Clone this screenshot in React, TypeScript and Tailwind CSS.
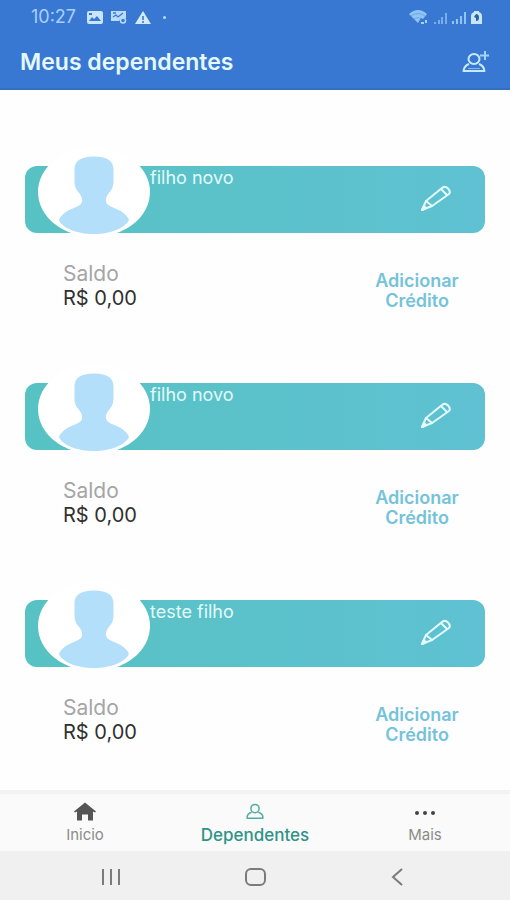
type Dependent = { id: number; name: string; balance: string };

const dependents: Dependent[] = [
  { id: 1, name: "filho novo", balance: "R$ 0,00" },
  { id: 2, name: "filho novo", balance: "R$ 0,00" },
  { id: 3, name: "teste filho", balance: "R$ 0,00" },
];

function StatusBar() {
  return (
    <div className="flex h-[34px] items-center justify-between pl-[31px] pr-7 text-[#a9cff8]">
      <div className="flex items-center gap-2">
        <span className="w-12 text-[18px] leading-5">10:27</span>
        <svg width="16" height="13" viewBox="0 0 16 13" aria-hidden="true">
          <path fill="#c9e5fb" fillRule="evenodd" d="M2 0h12q2 0 2 2v9q0 2-2 2H2q-2 0-2-2V2q0-2 2-2ZM2 10h12l-4-5-3 3-2-2Z" />
          <path fill="#3878d2" d="M2 2h3v2H2z" />
        </svg>
        <svg width="16" height="13" viewBox="0 0 16 13" aria-hidden="true">
          <path fill="#b9dcfa" d="M0 0h15v7h-5l-2 3H0Z" />
          <path fill="none" stroke="#3878d2" strokeWidth="1.3" d="m2 6 3-2 2 2 5-4M2 2h3" />
          <circle cx="12" cy="9.500" r="2.500" fill="none" stroke="#b9dcfa" strokeWidth="1.500" />
        </svg>
        <svg width="16" height="13" viewBox="0 0 16 13" aria-hidden="true">
          <path fill="#d1ebfc" d="m8 0 8 13H0Z" />
          <path stroke="#3878d2" strokeWidth="1.6" d="M8 5v4M8 10v2" />
        </svg>
        <span className="ml-1 size-[3px] rounded-full bg-[#b9dcfa]" />
      </div>
      <div className="flex items-end gap-[5px]">
        <svg width="20" height="14" viewBox="0 0 20 14" aria-hidden="true">
          <path fill="#8fc4f4" d="M0 4Q9-4 18 4l-4 5-2-1-3 5Z" />
          <path fill="none" stroke="#3878d2" strokeWidth=".4" d="M2 6q7-5 14 0M5 9q4-3 8 0" />
          <path stroke="#a9cff8" strokeWidth="2" d="M12 13h3M17 10v3" />
        </svg>
        <svg width="13" height="12" viewBox="0 0 13 12" aria-hidden="true">
          <path stroke="#79aeea" strokeWidth="2" d="M1 12v-2M5 12V8M8 12V5M12 12V1" />
        </svg>
        <svg width="14" height="13" viewBox="0 0 14 13" aria-hidden="true">
          <path stroke="#8fc4f4" strokeWidth="2" d="M1 13v-3M5 13V8M9 13V5M13 13V1" />
        </svg>
        <svg width="11" height="13" viewBox="0 0 11 13" aria-hidden="true">
          <path fill="#c9e5fb" d="M3 0h5v1q3 1 3 4v8H0V5q0-3 3-4Z" />
          <path fill="#2b5fae" d="M5 3q3 0 3 3.500T5 10V7L3 6Z" />
        </svg>
      </div>
    </div>
  );
}

function PersonIcon({ className }: { className: string }) {
  return (
    <svg viewBox="0 0 24 22" fill="none" stroke="currentColor" strokeWidth="2" className={className} aria-hidden="true">
      <ellipse cx="12" cy="7" rx="5.500" ry="5.500" />
      <path d="M7.500 12Q1 14 1.500 20h21Q23 14 16.500 12" strokeLinejoin="round" />
    </svg>
  );
}

function AddPersonIcon() {
  return (
    <svg width="28" height="22" viewBox="0 0 28 22" fill="none" stroke="#c6ebfc" strokeWidth="2" aria-hidden="true">
      <ellipse cx="12" cy="8" rx="5.500" ry="5" />
      <path d="M7 13Q2 15 1.500 20h21Q22 15 17 13" strokeLinejoin="round" />
      <path d="M6 17.500h12" stroke="#7fb8ea" strokeWidth="1" />
      <path d="M23 0v9M18 4.500h9" stroke="#9fd3f8" />
    </svg>
  );
}

function Avatar() {
  return (
    <svg viewBox="0 0 112 90" className="absolute -top-[19px] left-[13px] h-[90px] w-28" aria-hidden="true">
      <ellipse cx="56" cy="45" rx="56" ry="45" fill="#fff" />
      <path
        fill="#b3dffa"
        d="M56 9.500c-14 0-19.500 5-19.500 13v12c0 6 2.500 9 5 12 2 3 3 5 2.500 8-.5 3-3 4.500-7 6-8 3-14 7-16 12.500C24 81 39 87 56 87s31-6 35-14c-2-5.500-8-9.500-16-12.500-4-1.500-6.500-3-7-6-.5-3 .5-5 2.500-8 2.500-3 5-6 5-12v-12c0-8-5.500-13-19.500-13Z"
      />
    </svg>
  );
}

function PencilIcon() {
  return (
    <svg width="32" height="28" viewBox="0 0 32 28" fill="none" stroke="#e3fbfc" strokeWidth="2" strokeLinejoin="round" strokeLinecap="round" aria-hidden="true">
      <path d="m2 26 4-9L22 4q3-2.500 6 .5t1 5.500L12 22Z" />
      <path d="m6 17 6 5M21 5l6 6" />
      <path d="m2 26 2-4 2 2Z" fill="#e3fbfc" />
    </svg>
  );
}

function DependentCard({ dependent }: { dependent: Dependent }) {
  return (
    <li>
      <div className="relative flex h-[67px] items-center justify-between rounded-xl bg-linear-to-r from-[#57c2c3] to-[#5fc1d2] pl-[125px] pr-[33px]">
        <Avatar />
        <h2 className="self-start text-[18px] leading-6 text-[#e3fbfc]">{dependent.name}</h2>
        <button type="button" aria-label={`Editar ${dependent.name}`} className="-mt-1">
          <PencilIcon />
        </button>
      </div>
      <div className="flex items-start justify-between pl-[38px] pr-5 pt-7">
        <dl>
          <dt className="text-[21px] leading-[25px] text-[#a5a5a5]">Saldo</dt>
          <dd className="text-[20px] leading-[25px] text-[#303030]">{dependent.balance}</dd>
        </dl>
        <button type="button" className="mt-[10px] w-24 text-center text-[18px] font-semibold leading-5 text-[#74c3da]">
          Adicionar Crédito
        </button>
      </div>
    </li>
  );
}

export default function App() {
  return (
    <div className="flex min-h-screen flex-col bg-[#fefefe] font-['Inter','Roboto',sans-serif]">
      <header className="h-[90px] border-b-2 border-[#356fbd] bg-[#3878d2]">
        <StatusBar />
        <div className="flex h-14 items-center justify-between px-5">
          <h1 className="text-[23px] font-semibold leading-7 text-[#e4f8fe]">Meus dependentes</h1>
          <button type="button" aria-label="Adicionar dependente">
            <AddPersonIcon />
          </button>
        </div>
      </header>

      <main className="flex-1 px-[25px] pt-[76px]">
        <ul className="flex flex-col gap-[72px]">
          {dependents.map((d) => (
            <DependentCard key={d.id} dependent={d} />
          ))}
        </ul>
      </main>

      <nav className="grid h-[61px] grid-cols-3 border-t-4 border-[#f3f3f3] bg-[#fafafa] text-[15px] leading-5 text-[#8b8b8b]">
        <a href="#inicio" className="flex flex-col items-center gap-1 pt-2">
          <svg width="22" height="19" viewBox="0 0 22 18" aria-hidden="true">
            <path fill="#555" d="m11 0 11 9-1 1-2-1v9h-5v-6H8v6H3V9l-2 1-1-1Z" />
          </svg>
          Inicio
        </a>
        <a href="#dependentes" aria-current="page" className="flex flex-col items-center gap-1 pt-2 text-[17px] font-medium text-[#2e9487]">
          <PersonIcon className="h-[19px] w-[18px] text-[#4fae9f]" />
          Dependentes
        </a>
        <a href="#mais" className="flex flex-col items-center gap-1 pt-2">
          <svg width="20" height="19" viewBox="0 0 20 19" aria-hidden="true">
            <g fill="#444">
              <circle cx="2" cy="11" r="2" />
              <circle cx="10" cy="11" r="2" />
              <circle cx="18" cy="11" r="2" />
            </g>
          </svg>
          Mais
        </a>
      </nav>

      <div className="flex h-[49px] items-center justify-between bg-[#f0f0f0] pl-[101px] pr-[107px] pt-[2px] text-[#7b7b7b]">
        <button type="button" aria-label="Recentes">
          <svg width="20" height="18" viewBox="0 0 20 18" stroke="currentColor" strokeWidth="2" aria-hidden="true">
            <path d="M2 1v16M10 1v16M18 1v16" />
          </svg>
        </button>
        <button type="button" aria-label="Tela inicial">
          <svg width="22" height="18" viewBox="0 0 22 18" fill="none" stroke="currentColor" strokeWidth="2" aria-hidden="true">
            <rect x="1" y="1" width="19" height="16" rx="5" />
          </svg>
        </button>
        <button type="button" aria-label="Voltar">
          <svg width="12" height="18" viewBox="0 0 12 18" fill="none" stroke="currentColor" strokeWidth="2" aria-hidden="true">
            <path d="M11 1 2 9l9 8" />
          </svg>
        </button>
      </div>
    </div>
  );
}
